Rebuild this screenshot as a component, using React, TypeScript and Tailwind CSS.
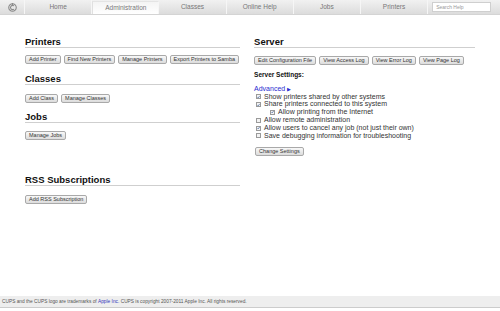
import React from "react";

//=============== DATA ===============//
const tabs = ["Home", "Administration", "Classes", "Online Help", "Jobs", "Printers"];

const settings = [
  { label: "Show printers shared by other systems", checked: true, indent: false },
  { label: "Share printers connected to this system", checked: true, indent: false },
  { label: "Allow printing from the Internet", checked: true, indent: true },
  { label: "Allow remote administration", checked: false, indent: false },
  { label: "Allow users to cancel any job (not just their own)", checked: true, indent: false },
  { label: "Save debugging information for troubleshooting", checked: false, indent: false },
];

//=============== SMALL PIECES ===============//
function Btn({ children }: { children: React.ReactNode }) {
  return (
    <button className="h-[9px] px-[3px] border border-[#a9a9a9] rounded-[2px] bg-gradient-to-b from-[#f8f8f8] to-[#dcdcdc] text-[5.5px] leading-[7px] text-[#333] whitespace-nowrap">
      {children}
    </button>
  );
}

function Heading({ children }: { children: React.ReactNode }) {
  return (
    <h2 className="text-[9.5px] leading-[11px] font-bold text-[#111] border-b border-[#cfcfcf]">
      {children}
    </h2>
  );
}

function Checkbox({ checked }: { checked: boolean }) {
  return (
    <span className="w-[5px] h-[5px] border border-[#9a9a9a] bg-[#f3f3f3] flex items-center justify-center shrink-0">
      {checked && (
        <svg width="4" height="4" viewBox="0 0 4 4">
          <path d="M0.5 2 L1.6 3.2 L3.6 0.6" stroke="#4a6aa0" strokeWidth="0.9" fill="none" />
        </svg>
      )}
    </span>
  );
}

function CupsLogo() {
  return (
    <svg width="9" height="9" viewBox="0 0 10 10">
      <circle cx="5" cy="5" r="4.2" fill="none" stroke="#8a8a8a" strokeWidth="1.2" />
      <path d="M6.6 3.3 A2.3 2.3 0 1 0 6.6 6.7" fill="none" stroke="#8a8a8a" strokeWidth="1.2" />
      <rect x="4.4" y="0" width="1.2" height="3" fill="#8a8a8a" />
    </svg>
  );
}

//=============== APP ===============//
export default function App() {
  return (
    <div
      className="w-[500px] h-[311px] bg-white flex flex-col text-[#333]"
      style={{ fontFamily: '"Liberation Sans", Arial, sans-serif' }}
    >
      {/*========= TAB BAR =========*/}
      <div className="h-[15px] flex bg-gradient-to-b from-[#f1f1f1] to-[#dcdcdc] border-b border-[#d4d4d4]">
        <div className="w-[25px] flex items-center justify-center border-r border-[#f6f6f6]">
          <CupsLogo />
        </div>
        {tabs.map((tab) => (
          <div
            key={tab}
            className={`w-[67.2px] flex items-center justify-center text-[6.5px] text-[#777] border-r border-[#f6f6f6] ${
              tab === "Administration" ? "bg-gradient-to-b from-[#f4f4f4] to-white mt-[1px] border-l border-l-[#e0e0e0] border-t border-t-[#e4e4e4]" : ""
            }`}
          >
            {tab}
          </div>
        ))}
        <div className="flex-1 flex items-center pl-[4px]">
          <div className="w-[59px] h-[10px] bg-white border border-[#cfcfcf] text-[5px] leading-[8px] text-[#999] pl-[3px]">
            Search Help
          </div>
        </div>
      </div>

      {/*========= CONTENT =========*/}
      <div className="flex px-[25px] pt-[21px] gap-[14px]">
        {/* Left column */}
        <div className="w-[218px] flex flex-col">
          <Heading>Printers</Heading>
          <div className="flex gap-[3px] mt-[7px]">
            <Btn>Add Printer</Btn>
            <Btn>Find New Printers</Btn>
            <Btn>Manage Printers</Btn>
            <Btn>Export Printers to Samba</Btn>
          </div>

          <div className="mt-[9px]">
            <Heading>Classes</Heading>
          </div>
          <div className="flex gap-[3px] mt-[9px]">
            <Btn>Add Class</Btn>
            <Btn>Manage Classes</Btn>
          </div>

          <div className="mt-[8px]">
            <Heading>Jobs</Heading>
          </div>
          <div className="flex gap-[3px] mt-[8px]">
            <Btn>Manage Jobs</Btn>
          </div>

          <div className="mt-[34px]">
            <Heading>RSS Subscriptions</Heading>
          </div>
          <div className="flex gap-[3px] mt-[9px]">
            <Btn>Add RSS Subscription</Btn>
          </div>
        </div>

        {/* Right column */}
        <div className="w-[224px] flex flex-col">
          <Heading>Server</Heading>
          <div className="flex gap-[3px] mt-[8px]">
            <Btn>Edit Configuration File</Btn>
            <Btn>View Access Log</Btn>
            <Btn>View Error Log</Btn>
            <Btn>View Page Log</Btn>
          </div>

          <div className="mt-[6px] text-[6.5px] leading-[8px] font-bold text-[#111]">Server Settings:</div>

          <div className="mt-[6px] text-[7px] leading-[8px] text-[#2b2bd0]">
            Advanced <span className="text-[5px]">▶</span>
          </div>

          <div className="flex flex-col">
            {settings.map((s) => (
              <div
                key={s.label}
                className={`h-[7.8px] flex items-center gap-[3px] text-[7px] text-[#333] ${
                  s.indent ? "pl-[16px]" : "pl-[2px]"
                }`}
              >
                <Checkbox checked={s.checked} />
                <span>{s.label}</span>
              </div>
            ))}
          </div>

          <div className="flex mt-[7px] pl-[1px]">
            <Btn>Change Settings</Btn>
          </div>
        </div>
      </div>

      {/*========= FOOTER =========*/}
      <div className="mt-auto mb-[3px] h-[12px] bg-[#eeeeee] border-b border-[#cccccc] flex items-center pl-[2px] text-[4.8px] text-[#555]">
        CUPS and the CUPS logo are trademarks of&nbsp;<span className="text-[#3333bb]">Apple Inc.</span>&nbsp;CUPS is copyright 2007-2011 Apple Inc. All rights reserved.
      </div>
    </div>
  );
}
